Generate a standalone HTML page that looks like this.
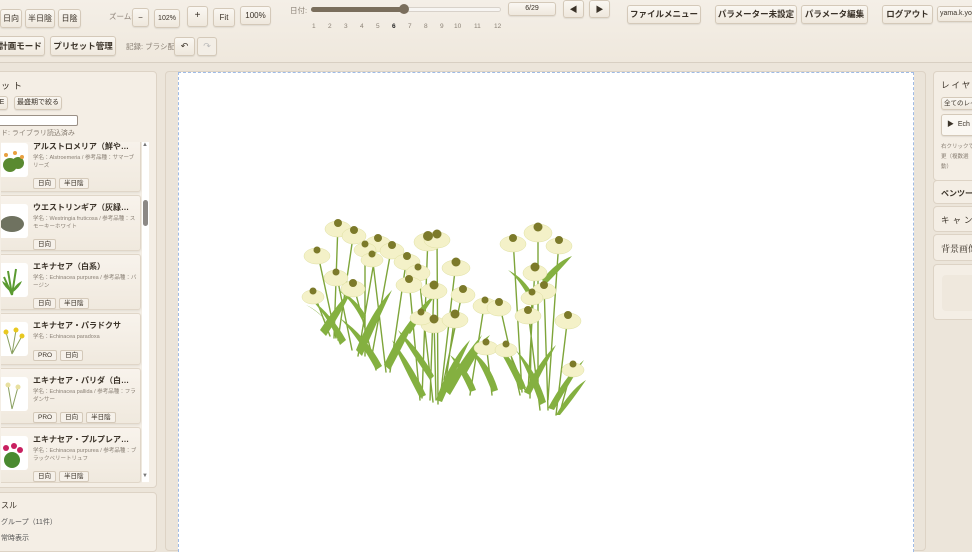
<!DOCTYPE html>
<html><head><meta charset="utf-8"><style>
*{box-sizing:border-box;margin:0;padding:0}
body{width:972px;height:542px;overflow:hidden;background:#ece5da;font-family:"Liberation Sans","Noto Sans CJK JP",sans-serif;color:#3a3228;position:relative}
.top{position:absolute;left:0;top:0;width:972px;height:63px;background:linear-gradient(#f4efe7,#efe8dd);border-bottom:1px solid #d8cfc2}
.b{position:absolute;height:19px;border:1px solid #d4c9b9;border-radius:3px;background:linear-gradient(#faf7f2,#efe8dd);font-size:8px;line-height:17px;text-align:center;color:#3a3228;box-shadow:0 1px 1px rgba(0,0,0,.08)}
.bb{font-weight:bold;font-size:8.5px}
.lbl{position:absolute;font-size:7.5px;color:#8a8075}
.panel{position:absolute;background:#f4eee5;border:1px solid #ddd3c5;border-radius:4px}
.card{position:absolute;left:-4px;width:144px;background:linear-gradient(#f8f3ec,#f0e9de);border:1px solid #e0d6c8;border-radius:3px;box-shadow:0 1px 2px rgba(0,0,0,.08)}
.card .th{position:absolute;left:0;top:8px;width:30px;height:34px;background:#fff;border-radius:3px;overflow:hidden}
.card .t{position:absolute;left:35px;top:6px;font-size:8px;font-weight:bold;white-space:nowrap;width:100px;overflow:hidden;text-overflow:ellipsis}
.card .s{position:absolute;left:35px;top:19px;font-size:5.5px;color:#8a8075;line-height:8px;width:104px}
.tg{display:inline-block;height:11px;padding:0 4px;border:1px solid #d4c9b9;border-radius:2px;font-size:6.5px;line-height:9px;margin-right:3px;background:#f6f1ea}
.tgs{position:absolute;left:35px}
</style></head><body>
<div class="top">
<div class="b" style="left:0;top:9px;width:22px">日向</div>
<div class="b" style="left:25px;top:9px;width:30px">半日陰</div>
<div class="b" style="left:58px;top:9px;width:23px">日陰</div>
<div class="lbl" style="left:109px;top:11px">ズーム:</div>
<div class="b" style="left:132px;top:8px;width:17px">−</div>
<div class="b" style="left:154px;top:9px;width:26px;font-size:7px">102%</div>
<div class="b" style="left:187px;top:6px;width:21px;height:21px;font-size:10px">+</div>
<div class="b" style="left:213px;top:8px;width:22px">Fit</div>
<div class="b" style="left:240px;top:6px;width:31px;height:19px">100%</div>
<div class="lbl" style="left:290px;top:5px">日付:</div>
<div style="position:absolute;left:311px;top:7px;width:190px;height:5px;border-radius:3px;background:#f7f5f2;border:1px solid #d8d2ca"></div>
<div style="position:absolute;left:311px;top:7px;width:93px;height:5px;border-radius:3px;background:#7a6e5c"></div>
<div style="position:absolute;left:399px;top:4px;width:10px;height:10px;border-radius:50%;background:#7a6e5c"></div>
<div style="position:absolute;left:310px;top:23px;font-size:6.5px;color:#8a8075">
<span style="position:absolute;left:2px">1</span><span style="position:absolute;left:18px">2</span><span style="position:absolute;left:34px">3</span><span style="position:absolute;left:50px">4</span><span style="position:absolute;left:66px">5</span><span style="position:absolute;left:82px;color:#222;font-weight:bold">6</span><span style="position:absolute;left:98px">7</span><span style="position:absolute;left:114px">8</span><span style="position:absolute;left:130px">9</span><span style="position:absolute;left:144px">10</span><span style="position:absolute;left:164px">11</span><span style="position:absolute;left:184px">12</span></div>
<div class="b" style="left:508px;top:2px;width:48px;height:14px;line-height:12px;font-size:7px">6/29</div>
<div class="b" style="left:563px;top:0;width:21px;height:18px;font-size:8px">◀</div>
<div class="b" style="left:589px;top:0;width:21px;height:18px;font-size:8px">▶</div>
<div class="b bb" style="left:627px;top:5px;width:74px">ファイルメニュー</div>
<div class="b bb" style="left:715px;top:5px;width:82px">パラメーター未設定</div>
<div class="b bb" style="left:801px;top:5px;width:67px">パラメータ編集</div>
<div class="b bb" style="left:882px;top:5px;width:51px">ログアウト</div>
<div class="b" style="left:937px;top:6px;width:40px;height:16px;line-height:14px;font-size:7px;text-align:left;padding-left:2px">yama.k.yo</div>
<div class="b bb" style="left:-4px;top:36px;width:49px;height:20px;line-height:18px">計画モード</div>
<div class="b bb" style="left:50px;top:36px;width:66px;height:20px;line-height:18px">プリセット管理</div>
<div class="lbl" style="left:126px;top:41px">記録: ブラシ配置</div>
<div class="b" style="left:174px;top:37px;width:21px;font-size:9px">↶</div>
<div class="b" style="left:197px;top:37px;width:20px;color:#bbb;font-size:9px;background:#f3eee6">↷</div>
</div>

<div class="panel" style="left:-5px;top:71px;width:162px;height:417px">
<div style="position:absolute;left:5px;top:7px;font-size:9px;letter-spacing:3px">ット</div>
<div class="b" style="left:0;top:24px;width:12px;height:14px;line-height:12px;font-size:7px">E</div>
<div class="b" style="left:18px;top:24px;width:48px;height:14px;line-height:12px;font-size:7px">最盛期で絞る</div>
<div style="position:absolute;left:0;top:43px;width:82px;height:11px;background:#fff;border:1px solid #9a9086;border-radius:2px"></div>
<div class="lbl" style="left:5px;top:56px;font-size:7px">ド: ライブラリ読込済み</div>
<div style="position:absolute;left:5px;top:70px;width:141px;height:341px;overflow:hidden;background:#f4eee5">
<div class="card" style="top:-8px;height:58px"><div class="th"><svg width="30" height="34"><g fill="#5a8a30"><circle cx="12" cy="22" r="7"/><circle cx="20" cy="20" r="6"/></g><g fill="#e8a040"><circle cx="8" cy="12" r="2"/><circle cx="17" cy="10" r="2"/><circle cx="24" cy="14" r="2"/></g></svg></div><div class="t">アルストロメリア（鮮やかな花…</div><div class="s">学名：Alstroemeria / 参考品種：サマーブリーズ</div><div class="tgs" style="top:37px"><span class="tg">日向</span><span class="tg">半日陰</span></div></div>
<div class="card" style="top:53px;height:56px"><div class="th"><svg width="30" height="34"><ellipse cx="14" cy="20" rx="12" ry="8" fill="#6f7260"/></svg></div><div class="t">ウエストリンギア（灰緑色）</div><div class="s">学名：Westringia fruticosa / 参考品種：スモーキーホワイト</div><div class="tgs" style="top:37px"><span class="tg">日向</span></div></div>
<div class="card" style="top:112px;height:56px"><div class="th"><svg width="30" height="34"><path d="M14,32 L10,8 M14,32 L18,6 M14,32 L6,14" stroke="#5a9a30" stroke-width="2"/><path d="M14,30 Q6,24 4,18 Q12,22 14,30Z M14,30 Q22,24 24,18 Q16,22 14,30Z" fill="#5a9a30"/></svg></div><div class="t">エキナセア（白系）</div><div class="s">学名：Echinacea purpurea / 参考品種：バージン</div><div class="tgs" style="top:37px"><span class="tg">日向</span><span class="tg">半日陰</span></div></div>
<div class="card" style="top:171px;height:52px"><div class="th"><svg width="30" height="34"><path d="M14,32 L8,10 M14,32 L18,8 M14,32 L24,14" stroke="#8aa060" stroke-width="1"/><g fill="#e8c820"><circle cx="8" cy="10" r="2.5"/><circle cx="18" cy="8" r="2.5"/><circle cx="24" cy="14" r="2.5"/></g></svg></div><div class="t">エキナセア・パラドクサ</div><div class="s">学名：Echinacea paradoxa</div><div class="tgs" style="top:30px"><span class="tg">PRO</span><span class="tg">日向</span></div></div>
<div class="card" style="top:226px;height:56px"><div class="th"><svg width="30" height="34"><path d="M14,32 L10,8 M14,32 L20,10" stroke="#8aa060" stroke-width="1"/><g fill="#e8e0a0"><circle cx="10" cy="8" r="2.5"/><circle cx="20" cy="10" r="2.5"/></g></svg></div><div class="t">エキナセア・パリダ（白系・下…</div><div class="s">学名：Echinacea pallida / 参考品種：フラダンサー</div><div class="tgs" style="top:37px"><span class="tg">PRO</span><span class="tg">日向</span><span class="tg">半日陰</span></div></div>
<div class="card" style="top:285px;height:56px"><div class="th"><svg width="30" height="34"><circle cx="14" cy="24" r="8" fill="#4a8a30"/><g fill="#c82060"><circle cx="8" cy="12" r="3"/><circle cx="16" cy="10" r="3"/><circle cx="22" cy="14" r="3"/></g></svg></div><div class="t">エキナセア・プルプレア（赤紫・…</div><div class="s">学名：Echinacea purpurea / 参考品種：ブラックベリートリュフ</div><div class="tgs" style="top:37px"><span class="tg">日向</span><span class="tg">半日陰</span></div></div>
</div>
<div style="position:absolute;left:146px;top:70px;width:7px;height:340px;background:#fff"></div>
<div style="position:absolute;left:147px;top:128px;width:5px;height:26px;border-radius:3px;background:#8c8885"></div>
<div style="position:absolute;left:146px;top:70px;font-size:6px;color:#777">▲</div>
<div style="position:absolute;left:146px;top:401px;font-size:6px;color:#777">▼</div>
</div>
<div class="panel" style="left:-5px;top:492px;width:162px;height:60px">
<div style="position:absolute;left:5px;top:7px;font-size:8px">スル</div>
<div style="position:absolute;left:5px;top:24px;font-size:7px;color:#555">グループ（11件）</div>
<div style="position:absolute;left:5px;top:40px;font-size:7px;color:#555">常時表示</div>
</div>

<div style="position:absolute;left:165px;top:71px;width:761px;height:480px;background:#ebe4d9;border:1px solid #ddd3c5;border-radius:4px"></div>
<div style="position:absolute;left:178px;top:72px;width:736px;height:480px;background:#fff;border:1px dashed #9fbbe6;border-bottom:none"></div>

<svg style="position:absolute;left:0;top:0" width="972" height="542">
<g stroke="#7ea53a" stroke-width="1.4" fill="none" stroke-linecap="round">
<path d="M338,223 L334,338 M354,230 L338,340 M317,250 L336,338 M313,291 L330,336 M336,272 L352,350 M378,238 L358,356 M365,244 L365,356 M392,245 L372,355 M353,283 L376,370 M372,254 L386,372 M407,256 L390,372 M428,236 L422,398 M437,234 L438,404 M418,267 L433,402 M456,262 L440,400 M434,285 L430,400 M463,289 L444,380 M485,300 L470,395 M409,279 L420,400 M434,319 L436,400 M455,314 L444,395 M486,342 L492,395 M538,227 L538,392 M513,238 L522,392 M559,240 L548,400 M535,267 L528,392 M544,285 L548,410 M499,302 L520,395 M528,310 L540,410 M568,315 L556,415 M573,364 L560,412 M506,344 L526,392 M532,292 L530,398"/>
</g>
<g fill="#84b040">
<path d="M320,330 Q340,300 352,290 Q340,315 326,336Z"/><path d="M340,345 Q330,320 312,300 Q332,315 346,340Z"/>
<path d="M356,350 Q372,310 392,290 Q378,320 362,356Z"/><path d="M376,370 Q360,340 340,318 Q366,336 382,366Z"/>
<path d="M384,365 Q400,330 420,310 Q406,340 390,370Z"/><path d="M420,398 Q400,360 392,340 Q412,365 426,395Z"/>
<path d="M436,400 Q450,360 470,340 Q456,370 442,402Z"/><path d="M430,380 Q410,350 398,330 Q420,350 434,376Z"/>
<path d="M444,390 Q464,355 482,335 Q468,365 450,395Z"/><path d="M470,392 Q460,370 450,355 Q468,368 476,390Z"/>
<path d="M492,392 Q482,365 470,350 Q490,362 498,390Z"/><path d="M520,390 Q506,360 496,345 Q516,360 526,388Z"/>
<path d="M524,392 Q540,360 556,345 Q544,368 530,395Z"/><path d="M540,405 Q528,370 516,350 Q536,370 546,402Z"/>
<path d="M548,408 Q566,375 584,360 Q570,382 554,410Z"/><path d="M556,415 Q570,390 586,380 Q574,398 560,415Z"/>
<path d="M530,300 Q520,280 508,270 Q524,278 534,296Z"/><path d="M542,280 Q556,262 572,256 Q560,270 546,284Z"/>
<path d="M362,320 Q352,300 338,290 Q356,298 366,316Z"/><path d="M404,330 Q420,305 436,294 Q424,312 410,334Z"/>
<path d="M330,325 Q318,310 306,305 Q320,312 334,330Z"/><path d="M462,370 Q474,345 490,335 Q478,352 466,374Z"/>
</g>
<g fill="#f4f1c8" stroke="#dfe0a0" stroke-width=".5">
<ellipse cx="338" cy="229" rx="13" ry="8"/><ellipse cx="354" cy="236" rx="12" ry="8"/><ellipse cx="378" cy="244" rx="13" ry="8"/><ellipse cx="392" cy="251" rx="12" ry="8"/><ellipse cx="365" cy="250" rx="11" ry="7"/><ellipse cx="372" cy="260" rx="11" ry="7"/><ellipse cx="317" cy="256" rx="13" ry="8"/><ellipse cx="336" cy="278" rx="12" ry="8"/><ellipse cx="353" cy="289" rx="12" ry="8"/><ellipse cx="313" cy="297" rx="11" ry="7"/><ellipse cx="407" cy="262" rx="13" ry="8"/><ellipse cx="428" cy="242" rx="14" ry="9"/><ellipse cx="437" cy="240" rx="13" ry="8"/><ellipse cx="418" cy="273" rx="12" ry="8"/><ellipse cx="456" cy="268" rx="14" ry="8"/><ellipse cx="409" cy="285" rx="13" ry="8"/><ellipse cx="434" cy="291" rx="13" ry="8"/><ellipse cx="463" cy="295" rx="12" ry="8"/><ellipse cx="485" cy="306" rx="12" ry="8"/><ellipse cx="434" cy="325" rx="13" ry="8"/><ellipse cx="455" cy="320" rx="13" ry="8"/><ellipse cx="421" cy="318" rx="11" ry="7"/><ellipse cx="486" cy="348" rx="12" ry="7"/><ellipse cx="538" cy="233" rx="14" ry="9"/><ellipse cx="513" cy="244" rx="13" ry="8"/><ellipse cx="559" cy="246" rx="13" ry="8"/><ellipse cx="535" cy="273" rx="12" ry="8"/><ellipse cx="544" cy="291" rx="12" ry="8"/><ellipse cx="499" cy="308" rx="12" ry="8"/><ellipse cx="528" cy="316" rx="13" ry="8"/><ellipse cx="568" cy="321" rx="13" ry="8"/><ellipse cx="573" cy="370" rx="11" ry="7"/><ellipse cx="506" cy="350" rx="11" ry="7"/><ellipse cx="532" cy="298" rx="11" ry="7"/>
</g>
<g fill="#7c7a2a">
<circle cx="338" cy="223" r="4"/><circle cx="354" cy="230" r="4"/><circle cx="378" cy="238" r="4"/><circle cx="392" cy="245" r="4"/><circle cx="365" cy="244" r="3.5"/><circle cx="372" cy="254" r="3.5"/><circle cx="317" cy="250" r="3.5"/><circle cx="336" cy="272" r="3.5"/><circle cx="353" cy="283" r="4"/><circle cx="313" cy="291" r="3.5"/><circle cx="407" cy="256" r="4"/><circle cx="428" cy="236" r="5"/><circle cx="437" cy="234" r="4.5"/><circle cx="418" cy="267" r="3.5"/><circle cx="456" cy="262" r="4.5"/><circle cx="409" cy="279" r="4"/><circle cx="434" cy="285" r="4.5"/><circle cx="463" cy="289" r="4"/><circle cx="485" cy="300" r="3.5"/><circle cx="434" cy="319" r="4.5"/><circle cx="455" cy="314" r="4.5"/><circle cx="421" cy="312" r="3.5"/><circle cx="486" cy="342" r="3.5"/><circle cx="538" cy="227" r="4.5"/><circle cx="513" cy="238" r="4"/><circle cx="559" cy="240" r="4"/><circle cx="535" cy="267" r="4.5"/><circle cx="544" cy="285" r="4"/><circle cx="499" cy="302" r="4"/><circle cx="528" cy="310" r="4"/><circle cx="568" cy="315" r="4"/><circle cx="573" cy="364" r="3.5"/><circle cx="506" cy="344" r="3.5"/><circle cx="532" cy="292" r="3.5"/>
</g>
</svg>

<div class="panel" style="left:933px;top:71px;width:50px;height:110px">
<div style="position:absolute;left:7px;top:7px;font-size:8.5px;letter-spacing:2px;white-space:nowrap">レイヤー</div>
<div class="b" style="left:7px;top:25px;width:40px;height:13px;line-height:11px;font-size:6.5px;text-align:left;padding-left:2px">全てのレイ</div>
<div class="b" style="left:7px;top:42px;width:40px;height:22px;line-height:20px;font-size:7px;text-align:left;padding-left:5px;background:#faf7f2">▶&nbsp; Ech</div>
<div style="position:absolute;left:7px;top:70px;font-size:5.5px;color:#8a8075;line-height:10px">右クリックで<br>更（複数選<br>動）</div>
</div>
<div class="panel" style="left:933px;top:180px;width:50px;height:24px"><div style="position:absolute;left:7px;top:7px;font-size:8px;font-weight:bold;white-space:nowrap">ペンツール</div></div>
<div class="panel" style="left:933px;top:206px;width:50px;height:26px"><div style="position:absolute;left:7px;top:7px;font-size:8.5px;letter-spacing:3px;white-space:nowrap">キャンバ</div></div>
<div class="panel" style="left:933px;top:234px;width:50px;height:27px"><div style="position:absolute;left:7px;top:7px;font-size:9px;white-space:nowrap;font-family:'Liberation Serif','Noto Serif CJK SC',serif">背景画像</div></div>
<div class="panel" style="left:933px;top:264px;width:50px;height:56px"><div style="position:absolute;left:8px;top:10px;width:40px;height:36px;background:#efe8dd;border-radius:4px"></div></div>
</body></html>
